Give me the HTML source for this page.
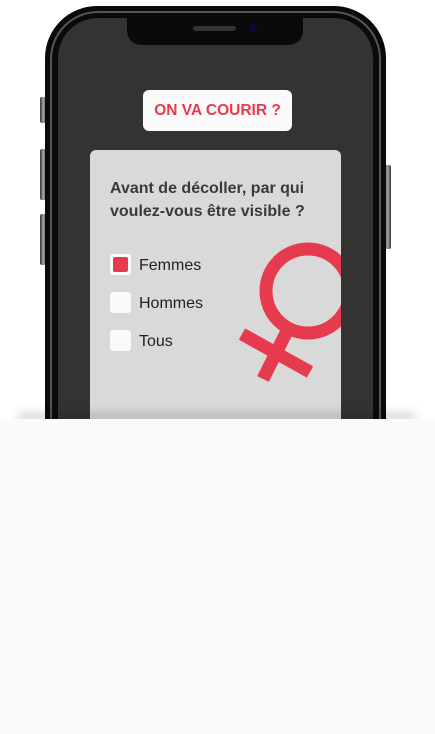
<!DOCTYPE html><html><head><style>
body{margin:0;width:435px;height:734px;background:#fff;position:relative;overflow:hidden;font-family:"Liberation Sans",sans-serif}
.a{position:absolute}
</style></head><body>
<div class="a" style="left:40px;top:97px;width:7px;height:26px;background:linear-gradient(90deg,#333,#aaa,#222);border-radius:2px"></div>
<div class="a" style="left:40px;top:149px;width:7px;height:51px;background:linear-gradient(90deg,#333,#aaa,#222);border-radius:2px"></div>
<div class="a" style="left:40px;top:214px;width:7px;height:51px;background:linear-gradient(90deg,#333,#aaa,#222);border-radius:2px"></div>
<div class="a" style="left:384px;top:165px;width:7px;height:84px;background:linear-gradient(90deg,#222,#aaa,#333);border-radius:2px"></div>
<div class="a" style="left:45px;top:6px;width:341px;height:500px;background:#0a0a0a;border-radius:52px"></div>
<div class="a" style="left:50px;top:11px;width:331px;height:490px;border:2px solid #555;border-radius:48px;box-sizing:border-box"></div>
<div class="a" style="left:58px;top:18px;width:315px;height:480px;background:#343332;border-radius:40px"></div>
<div class="a" style="left:127px;top:17px;width:176px;height:28px;background:#0a0a0a;border-radius:0 0 14px 14px"></div>
<div class="a" style="left:193px;top:26px;width:43px;height:5px;background:#333;border-radius:3px"></div>
<div class="a" style="left:249px;top:24px;width:8px;height:8px;background:#0b0b3a;border-radius:50%"></div>
<div class="a" style="left:143px;top:90px;width:149px;height:41px;background:#fafafa;border-radius:6px;color:#e63b4e;font-weight:bold;font-size:15.5px;line-height:41px;text-align:center">ON VA COURIR ?</div>
<div class="a" style="left:90px;top:150px;width:251px;height:300px;background:#d9d9d9;border-radius:6px;overflow:hidden">
<svg class="a" style="left:0;top:0" width="251" height="300"><g stroke="#e63b4e" stroke-width="13" fill="none"><circle cx="218" cy="141" r="42"/><line x1="198" y1="179" x2="173" y2="229"/><line x1="152" y1="184" x2="220" y2="222"/></g></svg>
<div class="a" style="left:20px;top:27px;font-weight:bold;font-size:16px;line-height:23px;color:#3a3a3a">Avant de décoller, par qui<br>voulez-vous être visible ?</div>
<div class="a" style="left:20px;top:104px;width:21px;height:21px;background:#fafafa;border-radius:3px"><div class="a" style="left:3px;top:3px;width:15px;height:15px;background:#e63b4e;border-radius:2px"></div></div>
<div class="a" style="left:20px;top:142px;width:21px;height:21px;background:#fafafa;border-radius:3px"></div>
<div class="a" style="left:20px;top:180px;width:21px;height:21px;background:#fafafa;border-radius:3px"></div>
<div class="a" style="left:49px;top:105px;font-size:16px;line-height:21px;color:#222">Femmes</div>
<div class="a" style="left:49px;top:143px;font-size:16px;line-height:21px;color:#222">Hommes</div>
<div class="a" style="left:49px;top:181px;font-size:16px;line-height:21px;color:#222">Tous</div>
</div>
<div class="a" style="left:18px;top:419px;width:397px;height:4px;box-shadow:0 -4px 10px rgba(0,0,0,.35)"></div>
<div class="a" style="left:0;top:419px;width:435px;height:315px;background:#fafafa"></div>
</body></html>
